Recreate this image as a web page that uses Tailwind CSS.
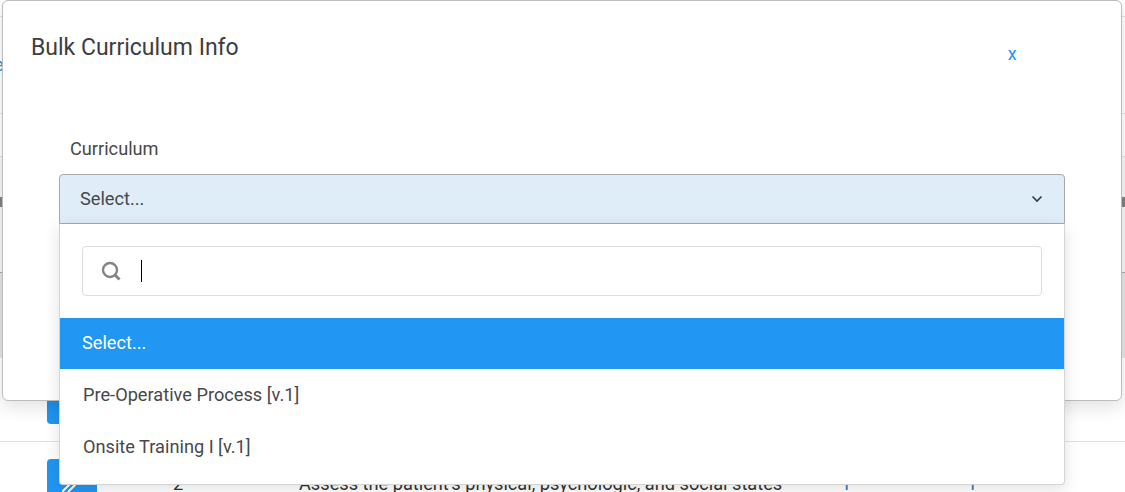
<!DOCTYPE html>
<html lang="en">
<head>
    <meta charset="UTF-8">
    <meta name="viewport" content="width=device-width, initial-scale=1.0">
    <title>Bulk Curriculum Info</title>
    <script src="https://cdn.jsdelivr.net/npm/@tailwindcss/browser@4"></script>
</head>
<body class="bg-white font-['Roboto',sans-serif] overflow-hidden">
    <div class="relative w-[1125px] h-[492px] overflow-hidden">
        <!-- page behind the modal -->
        <div class="flex flex-col">
            <div class="h-[17px] border-b border-[#e0e0e0]"></div>
            <div class="h-[97px] border-b border-[#e0e0e0] pt-[36px] text-[18px] leading-[24px] text-[#2196f3]"><span class="block -ml-[6px]">e</span></div>
            <div class="h-[43px] border-b border-[#e0e0e0]"></div>
            <div class="h-[116px] pt-[40px] border-b border-[#a8a8a8] bg-[#f7f7f7]"><div class="h-[10px] bg-[#808080]"></div></div>
            <div class="h-[85px] bg-[#e4e4e4]"></div>
            <div class="h-[84px] border-b border-[#e0e0e0] pl-[47px]"><div class="mt-[37px] w-[50px] h-[29px] rounded-b-[4px] bg-[#2196f3]"></div></div>
            <div class="flex items-start h-[50px] text-[#333333]">
                <div class="ml-[47px] mt-[17px] w-[50px] h-[40px] rounded-t-[4px] bg-[#2196f3] pl-[15px] pt-[19px]">
                    <svg class="w-[14px] h-[14px]" viewBox="0 0 14 14" fill="none" stroke="#ffffff" stroke-width="2"><path d="M0 14 8 6M6 14 14 6"/></svg>
                </div>
                <span class="ml-[76px] mt-[30px] w-[126px] text-[18.2px] leading-[24px]">2</span>
                <span class="mt-[30px] w-[542px] text-[18.2px] leading-[24px] whitespace-nowrap">Assess the patient's physical, psychologic, and social states</span>
                <span class="mt-[30px] w-[126px] text-[18.2px] leading-[24px] text-[#1a7fc4]">1</span>
                <span class="mt-[30px] text-[18.2px] leading-[24px] text-[#1a7fc4]">1</span>
            </div>
        </div>

        <!-- modal -->
        <div class="absolute left-[2px] top-0 w-[1120px] h-[401px] bg-white border border-[#bdbdbd] rounded-[6px] shadow-[0_6px_18px_rgba(0,0,0,0.12)]">
            <div class="flex items-start">
                <h2 class="ml-[28px] mt-[31px] text-[23px] leading-[32px] text-[#3d3d3d]">Bulk Curriculum Info</h2>
                <a class="ml-[769px] mt-[41px] text-[18px] leading-[24px] text-[#2196f3]" href="#">x</a>
            </div>
            <div class="relative mx-[56px] mt-[71px] w-[1006px]">
                <label class="block ml-[11px] mb-[13px] text-[18.2px] leading-[24px] text-[#484848]">Curriculum</label>
                <div class="flex items-center justify-between h-[50px] pl-[20px] pr-[21px] bg-[#dfedf9] border border-[#a6a9ac] rounded-t-[4px] text-[18.2px] text-[#484848]">
                    <span>Select...</span>
                    <svg class="w-[12px] h-[8px]" viewBox="0 0 12 8" fill="none" stroke="#3a3a3a" stroke-width="1.6"><path d="M1.5 1.5 6 6l4.5-4.5"/></svg>
                </div>
                <!-- open dropdown -->
                <div class="absolute left-0 top-[87px] w-[1006px] h-[261px] bg-white border border-t-0 border-[#d4d4d4] rounded-b-[4px] shadow-[0_4px_16px_rgba(0,0,0,0.12)]">
                    <div class="flex items-center h-[50px] mx-[22px] mt-[22px] border border-[#dddddd] rounded-[4px] pl-[18px]">
                        <svg class="w-[20px] h-[20px]" viewBox="0 0 20 20" fill="none" stroke="#858585" stroke-width="2.4"><circle cx="9" cy="9" r="7"/><path d="M14 14l4.5 4.5" stroke-width="3"/></svg>
                        <span class="ml-[20px] w-px h-[22px] bg-black"></span>
                    </div>
                    <ul class="mt-[22px] text-[18.2px]">
                        <li class="flex items-center h-[51px] pl-[22px] pb-[1px] bg-[#2196f3] text-white">Select...</li>
                        <li class="flex items-center h-[52px] pl-[23px] text-[#484848]">Pre-Operative Process [v.1]</li>
                        <li class="flex items-center h-[52px] pl-[23px] text-[#484848]">Onsite Training I [v.1]</li>
                    </ul>
                </div>
            </div>
        </div>
    </div>
</body>
</html>
